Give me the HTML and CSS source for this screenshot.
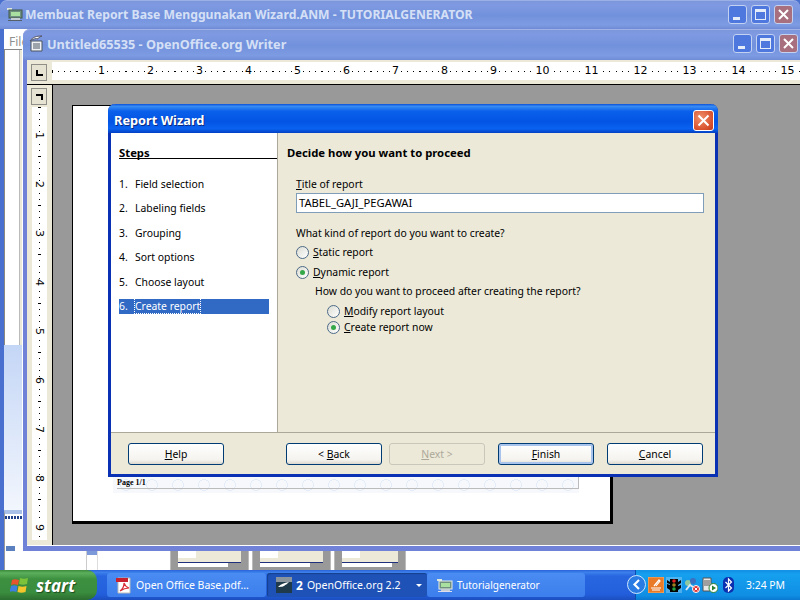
FILE: index.html
```html
<!DOCTYPE html>
<html lang="id">
<head>
    <meta charset="UTF-8">
    <title>Report Wizard</title>
    <link rel="stylesheet" href="styles.css">
</head>
<body>
<div class="desktop">

    <!-- window behind: tutorial generator -->
    <div class="win-back">
        <div class="title-faded title-back">
            <svg class="ttl-icon" width="17" height="15" viewBox="0 0 17 15"><rect x="1" y="1" width="5" height="2" fill="#dfe8dc"/><rect x="3" y="3" width="13" height="8" fill="#6f8f80" stroke="#40584a"/><rect x="5" y="5" width="9" height="4" fill="#a9e0a0"/><rect x="5" y="11" width="9" height="2" fill="#c4ccd4"/><rect x="2" y="13" width="14" height="1" fill="#55606a"/></svg>
            <span class="ttl-text">Membuat Report Base Menggunakan Wizard.ANM - TUTORIALGENERATOR</span>
            <div class="ctrls">
                <span class="ctrl"><i class="g-min"></i></span>
                <span class="ctrl"><i class="g-max"></i></span>
                <span class="ctrl ctrl-close">
                    <svg width="13" height="13" viewBox="0 0 13 13"><path d="M2 2l9 9M11 2l-9 9" stroke="#fff" stroke-width="2"/></svg>
                </span>
            </div>
        </div>
        <div class="back-client">
            <div class="back-menu">File</div>
            <div class="back-side">
                <div class="side-top"></div>
                <div class="side-blue"></div>
                <div class="side-thumb">
                    <div class="thumb-bar"></div>
                    <div class="thumb-sel"></div>
                </div>
            </div>
            <div class="strip-mark"></div>
            <div class="back-strip">
                <div class="strip-thumb"><div class="strip-a"></div><div class="strip-b"></div></div>
                <div class="strip-thumb"><div class="strip-a"></div><div class="strip-b"></div></div>
                <div class="strip-thumb strip-last"><div class="strip-a"></div><div class="strip-b"></div></div>
            </div>
        </div>
    </div>

    <!-- writer window -->
    <div class="win-writer">
        <div class="title-faded title-writer">
            <svg class="ttl-icon" width="17" height="17" viewBox="0 0 17 17"><path d="M3 6h11v10H3z" fill="#f0f2f6" stroke="#4a5460"/><path d="M5 9h7M5 11h7M5 13h7" stroke="#4a5460"/><path d="M2 6c3-4 6-5 12-5-3 1-4 2-4 3-2-1-5 0-8 2z" fill="#fff" stroke="#556"/></svg>
            <span class="ttl-text">Untitled65535 - OpenOffice.org Writer</span>
            <div class="ctrls">
                <span class="ctrl"><i class="g-min"></i></span>
                <span class="ctrl"><i class="g-max"></i></span>
                <span class="ctrl ctrl-close">
                    <svg width="13" height="13" viewBox="0 0 13 13"><path d="M2 2l9 9M11 2l-9 9" stroke="#fff" stroke-width="2"/></svg>
                </span>
            </div>
        </div>
        <div class="writer-client">
            <div class="ruler-row">
                <div class="corner corner-h"><i></i></div>
                <div class="ruler-h">
                    <span><b>1</b></span><span><b>2</b></span><span><b>3</b></span><span><b>4</b></span><span><b>5</b></span>
                    <span><b>6</b></span><span><b>7</b></span><span><b>8</b></span><span><b>9</b></span><span><b>10</b></span>
                    <span><b>11</b></span><span><b>12</b></span><span><b>13</b></span><span><b>14</b></span><span><b>15</b></span>
                </div>
            </div>
            <div class="doc-row">
                <div class="ruler-col">
                    <div class="corner corner-v"><i></i></div>
                    <div class="ruler-v">
                        <span><b>1</b></span><span><b>2</b></span><span><b>3</b></span><span><b>4</b></span><span><b>5</b></span>
                        <span><b>6</b></span><span><b>7</b></span><span><b>8</b></span><span><b>9</b></span>
                    </div>
                </div>
                <div class="doc-area">
                    <div class="page">
                        <div class="page-footer"><span class="footer-text">Page 1/1</span></div>
                    </div>
                </div>
            </div>
        </div>
    </div>

    <!-- report wizard dialog -->
    <div class="dialog">
        <div class="dlg-title">
            <span>Report Wizard</span>
            <span class="dlg-close">
                <svg width="13" height="13" viewBox="0 0 13 13"><path d="M1.5 1.5l10 10M11.5 1.5l-10 10" stroke="#fff" stroke-width="2"/></svg>
            </span>
        </div>
        <div class="dlg-body">
            <div class="steps">
                <div class="steps-head"><u>Steps</u></div>
                <ol class="step-list">
                    <li><span>1.</span>Field selection</li>
                    <li><span>2.</span>Labeling fields</li>
                    <li><span>3.</span>Grouping</li>
                    <li><span>4.</span>Sort options</li>
                    <li><span>5.</span>Choose layout</li>
                    <li class="step-on"><span>6.</span><em>Create report</em></li>
                </ol>
            </div>
            <div class="pane">
                <div class="pane-head">Decide how you want to proceed</div>
                <div class="form">
                    <div class="lbl"><u>T</u>itle of report</div>
                    <div class="field">TABEL_GAJI_PEGAWAI</div>
                    <div class="lbl lbl-kind">What kind of report do you want to create?</div>
                    <div class="opt opt-a"><i class="radio"></i><span><u>S</u>tatic report</span></div>
                    <div class="opt opt-b"><i class="radio radio-on"></i><span><u>D</u>ynamic report</span></div>
                    <div class="sub">
                        <div class="lbl">How do you want to proceed after creating the report?</div>
                        <div class="sub-opts">
                            <div class="opt opt-c"><i class="radio"></i><span><u>M</u>odify report layout</span></div>
                            <div class="opt opt-d"><i class="radio radio-on"></i><span><u>C</u>reate report now</span></div>
                        </div>
                    </div>
                </div>
            </div>
        </div>
        <div class="dlg-buttons">
            <button type="button" class="btn"><u>H</u>elp</button>
            <button type="button" class="btn btn-back">&lt; <u>B</u>ack</button>
            <button type="button" class="btn btn-off"><u>N</u>ext &gt;</button>
            <button type="button" class="btn btn-default btn-finish"><u>F</u>inish</button>
            <button type="button" class="btn btn-cancel"><u>C</u>ancel</button>
        </div>
    </div>

    <!-- taskbar -->
    <div class="taskbar">
        <div class="start">
            <svg width="20" height="20" viewBox="0 0 20 20"><path d="M2 5c2-1 4-1 7 0l-1 5c-3-1-5-1-7 0z" fill="#e8552c"/><path d="M10 3c3 1 5 1 8 0l-1 6c-3 1-5 1-8 0z" fill="#7cc23a"/><path d="M1 11c2-1 4-1 6.500 0l-1 6c-3-1-5-1-7 0z" fill="#3f7fe0"/><path d="M8.500 11c3 1 5 1 8 0l-1 6c-3 1-5 1-8 0z" fill="#f5c52c"/></svg>
            <span>start</span>
        </div>
        <div class="tasks">
            <div class="task task-pdf">
                <svg width="16" height="17" viewBox="0 0 16 17"><path d="M2 1h12v15H2z" fill="#fff" stroke="#bbb"/><rect x="0" y="1" width="12" height="4" fill="#c8202c"/><path d="M4 14c3-2 4-5 4-8 1 3 2 4 5 5-3 0-6 1-9 3z" fill="none" stroke="#d8303a" stroke-width="1.200"/></svg>
                <span>Open Office Base.pdf...</span>
            </div>
            <div class="task task-group">
                <svg width="16" height="16" viewBox="0 0 16 16"><rect width="16" height="16" fill="#1f3a4a"/><rect y="0" width="16" height="5" fill="#8a949c"/><path d="M2 10c3-3 6-4 11-5-2 2-3 3-4 3 0 1-3 2-7 2z" fill="#fff"/></svg>
                <strong>2</strong>
                <span>OpenOffice.org 2.2</span>
                <i class="task-arrow"></i>
            </div>
            <div class="task task-tg">
                <svg width="17" height="15" viewBox="0 0 17 15"><rect x="1" y="1" width="5" height="2" fill="#dfe8dc"/><rect x="3" y="3" width="13" height="8" fill="#6f8f80" stroke="#e8eee8"/><rect x="5" y="5" width="9" height="4" fill="#a9e0a0"/><rect x="5" y="11" width="9" height="2" fill="#c4ccd4"/><rect x="2" y="13" width="14" height="1" fill="#dde"/></svg>
                <span>Tutorialgenerator</span>
            </div>
        </div>
        <div class="tray">
            <span class="tray-toggle">
                <svg width="10" height="11" viewBox="0 0 10 11"><path d="M7 1L2.500 5.500 7 10" fill="none" stroke="#fff" stroke-width="2.200"/></svg>
            </span>
            <div class="tray-icons">
                <svg width="16" height="16" viewBox="0 0 16 16"><rect width="16" height="16" fill="#e87a28" stroke="#f8b070"/><path d="M3 11h10M4 13h8M6 9l5-6 1 1-4 5" fill="none" stroke="#fff" stroke-width="1.200"/></svg>
                <svg width="16" height="16" viewBox="0 0 16 16"><rect width="16" height="16" fill="#fff" opacity=".25"/><path d="M1 3l3 2V2h8v3l3-2v3l-3 2v1l3-1v3l-3 2v2H4v-2l-3-2V7l3 1V7L1 6z" fill="#000"/><circle cx="8" cy="4" r="1.800" fill="#e02020"/><circle cx="8" cy="8" r="1.800" fill="#a08020"/><circle cx="8" cy="12" r="1.800" fill="#20a040"/></svg>
                <svg width="16" height="16" viewBox="0 0 16 16"><circle cx="4" cy="6" r="3" fill="#8fc8a0"/><circle cx="9" cy="4" r="3" fill="#3a70c0"/><path d="M2 13l4-5 3 2" stroke="#dfe8f0" stroke-width="2" fill="none"/><circle cx="12" cy="12" r="3.500" fill="#e03030" stroke="#fff"/><path d="M10.500 10.500l3 3M13.500 10.500l-3 3" stroke="#fff"/></svg>
                <svg width="16" height="16" viewBox="0 0 16 16"><path d="M1 1h8v13H1z" fill="#e8e8e8" stroke="#555"/><path d="M2 4h6M2 6h6M2 8h6" stroke="#555"/><circle cx="11.500" cy="11" r="4.500" fill="#fff" stroke="#2a8030"/><path d="M10 8.500v5l4-2.500z" fill="#2a8030"/></svg>
                <svg width="13" height="16" viewBox="0 0 13 16"><rect x="1" y="0" width="11" height="16" rx="5" fill="#0a2fb0"/><path d="M3.500 5l6 6-3 3V2l3 3-6 6" fill="none" stroke="#fff" stroke-width="1.200"/></svg>
            </div>
            <span class="clock">3:24 PM</span>
        </div>
    </div>
</div>
</body>
</html>
```

FILE: styles.css
```css
* {
    box-sizing: border-box;
}
body {
    margin: 0;
    font-family: "Noto Sans", "Liberation Sans", sans-serif;
    font-size: 10.4px;
}
.desktop {
    position: relative;
    width: 800px;
    height: 600px;
    overflow: hidden;
    background: #fff;
}

/* faded (inactive) title bars */
.title-faded {
    display: flex;
    align-items: center;
    color: #d5e0f6;
    font-family: "Noto Sans", sans-serif;
    font-weight: 700;
    background: linear-gradient(#7d97dc 0, #7f9ae2 15%, #7291dc 50%, #7d9be2 85%, #6f8bd6 100%);
}
.ttl-icon {
    flex: none;
}
.ttl-text {
    flex: 1;
    white-space: nowrap;
}
.ctrls {
    display: flex;
    gap: 4px;
}
.ctrl {
    display: flex;
    align-items: center;
    justify-content: center;
    position: relative;
    width: 19px;
    height: 19px;
    border: 1px solid #c4d2f2;
    border-radius: 3px;
    background: #4f78df;
}
.ctrl-close {
    background: #a8707e;
}
.g-min {
    position: absolute;
    left: 4px;
    bottom: 3px;
    width: 7px;
    height: 3px;
    background: #e4ecfa;
}
.g-max {
    width: 11px;
    height: 11px;
    border: 1px solid #e4ecfa;
    border-top-width: 3px;
}

/* back window */
.win-back {
    position: absolute;
    left: 0;
    top: 0;
    width: 800px;
    height: 570px;
    display: flex;
    flex-direction: column;
    background: #4a70cf;
}
.title-back {
    flex: none;
    height: 29px;
    padding: 0 7px 2px 6px;
    border-radius: 7px 7px 0 0;
    border-top: 1px solid #9cb0e8;
    font-size: 12.2px;
}
.title-back .ttl-text {
    margin-left: 2px;
}
.back-client {
    flex: 1;
    position: relative;
    margin-left: 4px;
    background: #fff;
}
.back-menu {
    height: 20px;
    padding: 4px 0 0 5px;
    font-size: 12px;
    color: #8f8f8f;
}
.back-side {
    display: flex;
    flex-direction: column;
    width: 18px;
    height: 521px;
}
.side-top {
    height: 296px;
    background: linear-gradient(to right, #8a8a80 0 1px, #fff 1px 15px, #bbb 15px 16px, #ece9d8 16px);
    border-top: 1px solid #888;
}
.side-blue {
    height: 165px;
    background: linear-gradient(#c4d6f6, #f2f6fd);
}
.side-thumb {
    flex: 1;
    position: relative;
    background: #fff;
    border-top: 4px solid #a8c0e8;
    border-left: 1px solid #999;
}
.thumb-bar {
    height: 3px;
    margin-top: 2px;
    background: repeating-linear-gradient(to right, #20408c 0 2px, #fff 2px 3px);
}
.thumb-sel {
    width: 9px;
    height: 5px;
    margin: 27px 0 0 1px;
    background: #5a80c0;
}
.strip-mark {
    position: absolute;
    left: 82px;
    bottom: 0;
    width: 12px;
    height: 19px;
    border-left: 1px solid #ccc;
    border-right: 1px solid #ddd;
    background: linear-gradient(#7c9ad8 0 4px, #fff 4px);
}
.back-strip {
    position: absolute;
    left: 166px;
    bottom: 0;
    display: flex;
    gap: 3px;
    height: 19px;
}
.strip-thumb {
    width: 79px;
    padding: 0 7px;
    background: #999;
    border-left: 1px solid #bbb;
    border-right: 1px solid #bbb;
}
.strip-last {
    width: 72px;
}
.strip-a {
    height: 12px;
    background:
        linear-gradient(#fff, #fff) 0 0 / 18px 7px no-repeat,
        #ece9d8;
    border-bottom: 1px solid #20307c;
}
.strip-b {
    height: 4px;
    width: 50px;
    background: #fff;
}

/* writer window */
.win-writer {
    position: absolute;
    left: 23px;
    top: 29px;
    width: 777px;
    height: 522px;
    display: flex;
    flex-direction: column;
    background: #6f82d8;
    border-radius: 7px 0 0 0;
    padding: 0 0 5px 4px;
}
.title-writer {
    flex: none;
    height: 31px;
    margin-left: -4px;
    padding: 0 2px 3px 5px;
    border-radius: 7px 0 0 0;
    border-top: 1px solid #a0b2e8;
    font-size: 12.7px;
}
.title-writer .ttl-text {
    margin-left: 2px;
}
.writer-client {
    flex: 1;
    min-height: 0;
    display: flex;
    flex-direction: column;
    background: #ece9d8;
    border-bottom: 1px solid #fff;
}
.ruler-row {
    display: flex;
    flex: none;
    height: 25px;
    padding-top: 2px;
    border-bottom: 1px solid #000;
}
.corner {
    position: relative;
    flex: none;
    width: 16px;
    height: 17px;
    border: 1px solid #8f8f88;
    background: #e6e3d2;
}
.corner-h {
    margin: 2px 5px 0 4px;
}
.corner-v {
    margin: 3px 0 2px 4px;
}
.corner i {
    position: absolute;
    width: 7px;
    height: 6px;
    border: 2px solid #000;
}
.corner-h i {
    left: 4px;
    top: 5px;
    border-top: 0;
    border-right: 0;
}
.corner-v i {
    left: 4px;
    top: 5px;
    border-bottom: 0;
    border-left: 0;
}
.ruler-h {
    flex: 1;
    display: flex;
    height: 18px;
    overflow: hidden;
    padding-left: 25px;
    background:
        repeating-linear-gradient(to right, #000 0 1px, transparent 1px 49px) 0 center / 100% 3px no-repeat,
        repeating-linear-gradient(to right, #000 0 1px, transparent 1px 6.125px) 0 center / 100% 1px no-repeat,
        #fff;
    font-family: "DejaVu Sans", sans-serif;
    font-size: 11px;
    line-height: 18px;
    text-align: center;
    color: #000;
}
.ruler-h span {
    flex: none;
    width: 49px;
}
.ruler-h b,
.ruler-v b {
    font-weight: 400;
    background: #fff;
}
.doc-row {
    flex: 1;
    display: flex;
    min-height: 0;
}
.ruler-col {
    flex: none;
    width: 25px;
    min-height: 0;
    display: flex;
    flex-direction: column;
}
.ruler-v {
    flex: 1;
    min-height: 0;
    width: 15px;
    margin: 0 0 5px 5px;
    padding-top: 4px;
    overflow: hidden;
    background:
        repeating-linear-gradient(to bottom, #000 0 1px, transparent 1px 49px) center 0 / 3px 100% no-repeat,
        repeating-linear-gradient(to bottom, #000 0 1px, transparent 1px 6.125px) center 0 / 1px 100% no-repeat,
        #fff;
    font-family: "DejaVu Sans", sans-serif;
    font-size: 11px;
    color: #000;
}
.ruler-v span {
    display: block;
    height: 49px;
    writing-mode: vertical-rl;
    text-align: center;
    line-height: 15px;
}
.doc-area {
    flex: 1;
    position: relative;
    background: #999;
    border-left: 1px solid #000;
}
.page {
    position: absolute;
    left: 19px;
    top: 20px;
    width: 541px;
    height: 419px;
    background: #fff;
    border: solid #000;
    border-width: 1px 3px 3px 1px;
}
.page-footer {
    position: absolute;
    left: 40px;
    top: 371px;
    width: 466px;
    height: 16px;
    padding-left: 4px;
    background:
        radial-gradient(circle at 13px 8px, transparent 5px, #e4ecf8 5px 6px, transparent 6px) 0 0 / 26px 16px,
        #f6f8fc;
    font-family: "Liberation Serif", serif;
    font-size: 8px;
    font-weight: 700;
    line-height: 11px;
    color: #000;
}
.footer-text {
    display: inline-block;
    width: 100%;
    border-bottom: 1px solid #bbb;
    border-right: 1px solid #bbb;
}

/* dialog */
.dialog {
    position: absolute;
    left: 108px;
    top: 104px;
    width: 610px;
    height: 373px;
    display: flex;
    flex-direction: column;
    background: #ece9d8;
    border: solid #0a30b4;
    border-width: 0 3px 3px 3px;
    border-radius: 7px 7px 0 0;
    color: #000;
}
.dlg-title {
    flex: none;
    display: flex;
    align-items: center;
    justify-content: space-between;
    height: 29px;
    margin: 0 -3px;
    padding: 3px 4px 0 6px;
    border-radius: 7px 7px 0 0;
    background: linear-gradient(#0a52d8 0, #3a8cf4 8%, #0a60ea 25%, #0354e4 60%, #0a62f0 85%, #0240c4 100%);
    color: #fff;
    font-family: "Noto Sans", sans-serif;
    font-weight: 700;
    font-size: 12.8px;
    text-shadow: 1px 1px 0 #0a2a80;
}
.dlg-close {
    display: flex;
    align-items: center;
    justify-content: center;
    width: 21px;
    height: 21px;
    border: 1px solid #fff;
    border-radius: 3px;
    background: radial-gradient(circle at 35% 35%, #f0906c, #d8502c 70%, #c03c20);
}
.dlg-body {
    flex: 1;
    display: flex;
    min-height: 0;
    border-bottom: 1px solid #aca899;
}
.steps {
    flex: none;
    width: 167px;
    background: #fff;
    border-right: 1px solid #aca899;
    padding: 13px 0 0 8px;
}
.steps-head {
    height: 13px;
    line-height: 13px;
    font-weight: 700;
    font-size: 11.3px;
}
.step-list {
    list-style: none;
    margin: -1px 0 0;
    padding: 18px 0 0;
    border-top: 1px solid #000;
}
.step-list li {
    width: 150px;
    height: 15px;
    margin-bottom: 9.4px;
    line-height: 15px;
    white-space: nowrap;
}
.step-list span {
    display: inline-block;
    width: 16px;
}
.step-on {
    background: #316ac5;
    color: #fff;
}
.step-on em {
    font-style: normal;
    outline: 1px dotted #fff;
}
.pane {
    flex: 1;
    padding: 13px 11px 0 9px;
}
.pane-head {
    height: 13px;
    line-height: 13px;
    font-weight: 700;
    font-size: 11.3px;
}
.form {
    padding: 18px 0 0 9px;
}
.lbl {
    height: 14px;
    line-height: 14px;
    white-space: nowrap;
}
.field {
    height: 20px;
    margin-top: 2px;
    padding-left: 2px;
    font-size: 11.2px;
    line-height: 18px;
    background: #fff;
    border: 1px solid #7f9db9;
    white-space: nowrap;
}
.lbl-kind {
    margin-top: 13px;
}
.opt {
    display: flex;
    align-items: center;
    gap: 4px;
    height: 14px;
    line-height: 14px;
}
.opt-a {
    margin-top: 5px;
}
.opt-b {
    margin-top: 6px;
}
.sub {
    padding: 5px 0 0 19px;
}
.sub-opts {
    padding: 6px 0 0 12px;
}
.opt-d {
    margin-top: 2px;
}
.radio {
    flex: none;
    position: relative;
    width: 13px;
    height: 13px;
    border: 1px solid #4c6a86;
    border-radius: 50%;
    background: linear-gradient(135deg, #dcdcd4, #fff);
}
.radio-on::after {
    content: "";
    position: absolute;
    left: 3px;
    top: 3px;
    width: 5px;
    height: 5px;
    border-radius: 50%;
    background: #34a848;
}
.dlg-buttons {
    flex: none;
    display: flex;
    height: 41px;
    padding: 10px 0 0 17px;
}
.btn {
    width: 96px;
    height: 22px;
    padding: 0;
    border: 1px solid #003c74;
    border-radius: 3px;
    background: linear-gradient(#fff, #f4f3ee 80%, #dcd8ce);
    font-family: inherit;
    font-size: 10.4px;
    color: #000;
}
.btn-back {
    margin-left: 62px;
}
.btn-off {
    margin-left: 7px;
    border-color: #c9c7ba;
    background: #ece9d8;
    color: #aca899;
}
.btn-finish {
    margin-left: 13px;
}
.btn-default {
    box-shadow: inset 0 0 0 2px #a8c4ec;
}
.btn-cancel {
    margin-left: 13px;
}

/* taskbar */
.taskbar {
    position: absolute;
    left: 0;
    top: 570px;
    width: 800px;
    height: 30px;
    display: flex;
    background: linear-gradient(#2a62d8 0, #3c80ec 8%, #2866e0 20%, #235fdc 80%, #1c4ec0 100%);
    color: #fff;
}
.start {
    flex: none;
    display: flex;
    align-items: center;
    gap: 6px;
    width: 97px;
    padding-left: 10px;
    border-radius: 0 10px 10px 0;
    background: linear-gradient(#3a8a3c 0, #5cb05c 10%, #3c9040 30%, #3a8c3e 75%, #2c6c30 100%);
    font-family: "Open Sans", sans-serif;
    font-size: 17px;
    font-style: italic;
    font-weight: 700;
    text-shadow: 1px 1px 1px #1c4c20;
}
.tasks {
    flex: 1;
    display: flex;
    padding: 3px 0 0 10px;
}
.task {
    display: flex;
    align-items: center;
    gap: 4px;
    height: 24px;
    padding-left: 9px;
    font-size: 10.5px;
    white-space: nowrap;
    border-radius: 3px;
    background: linear-gradient(#4a8cf2, #3c7eec);
}
.task-pdf {
    width: 159px;
}
.task-group {
    position: relative;
    width: 160px;
    margin-left: 1px;
    background: #1e52b7;
    box-shadow: inset 1px 1px 1px #14408c;
}
.task-group strong {
    font-size: 12px;
}
.task-arrow {
    position: absolute;
    right: 5px;
    top: 11px;
    border: solid transparent;
    border-width: 3px 3px 0;
    border-top-color: #fff;
}
.task-tg {
    width: 158px;
    font-size: 10px;
}
.tray {
    flex: none;
    position: relative;
    display: flex;
    align-items: center;
    width: 165px;
    padding-left: 12px;
    border-left: 1px solid #0f4cb0;
    background: linear-gradient(#1290e4 0, #16a0ee 15%, #0f8ee4 85%, #0a78d0 100%);
}
.tray-toggle {
    position: absolute;
    left: -9px;
    top: 5px;
    display: flex;
    align-items: center;
    justify-content: center;
    width: 19px;
    height: 19px;
    border: 1px solid #cfe6fc;
    border-radius: 50%;
    background: #2a7ce4;
}
.tray-icons {
    display: flex;
    align-items: center;
    gap: 2px;
}
.tray-icons svg:last-child {
    margin-left: 2px;
}
.clock {
    margin-left: 11px;
    font-size: 10.4px;
    white-space: nowrap;
}
```
